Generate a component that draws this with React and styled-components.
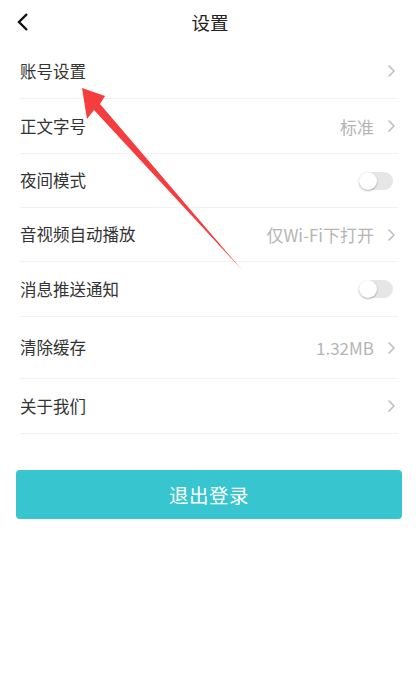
import React, { useState } from 'react';
import styled, { createGlobalStyle } from 'styled-components';

const GlobalStyle = createGlobalStyle`
  html, body {
    margin: 0;
    padding: 0;
    background: #fff;
  }
  body {
    font-family: 'Noto Sans CJK SC', 'Noto Sans', sans-serif;
    -webkit-font-smoothing: antialiased;
  }
`;

const Page = styled.div`
  position: relative;
  width: 420px;
  min-height: 684px;
  background: #fff;
`;

const Header = styled.header`
  display: flex;
  align-items: center;
  justify-content: center;
  position: relative;
  height: 44px;
`;

const BackButton = styled.button`
  position: absolute;
  left: 12px;
  top: 10px;
  display: flex;
  align-items: center;
  justify-content: center;
  width: 22px;
  height: 24px;
  padding: 0;
  border: none;
  background: none;
  cursor: pointer;
`;

const Title = styled.h1`
  margin: 0;
  font-size: 18.5px;
  font-weight: 400;
  color: #222;
  line-height: 1;
`;

const List = styled.ul`
  list-style: none;
  margin: 0;
  padding: 0;
`;

const Row = styled.li`
  display: flex;
  align-items: center;
  justify-content: space-between;
  box-sizing: border-box;
  height: ${({ $height }) => $height || 55}px;
  margin: 0 22px 0 20px;
  border-bottom: 1px solid #f2f2f2;
  cursor: pointer;
`;

const Label = styled.span`
  font-size: 16.5px;
  color: #333;
  line-height: 1;
`;

const Right = styled.div`
  display: flex;
  align-items: center;
  gap: 13px;
`;

const Value = styled.span`
  font-size: 17px;
  color: #b5b5b5;
  line-height: 1;
`;

const ChevronIcon = styled.svg`
  margin-right: 2px;
`;

const Track = styled.span`
  position: relative;
  display: inline-block;
  width: 34px;
  height: 18px;
  margin-right: 5px;
  border-radius: 9px;
  background: ${({ $on }) => ($on ? '#36c5ce' : '#e6e6e6')};
  transition: background 0.2s;
`;

const Knob = styled.span`
  position: absolute;
  top: 0;
  left: ${({ $on }) => ($on ? '16px' : '0')};
  width: 18px;
  height: 18px;
  border-radius: 50%;
  background: #fff;
  box-shadow: 0 1px 2px rgba(0, 0, 0, 0.3);
  transition: left 0.2s;
`;

const LogoutButton = styled.button`
  display: block;
  box-sizing: border-box;
  width: 386px;
  height: 49px;
  margin: 36px 18px 0 16px;
  border: none;
  border-radius: 4px;
  background: #37c6cf;
  color: #fff;
  font-family: inherit;
  font-size: 19.5px;
  letter-spacing: 0.5px;
  cursor: pointer;
`;

const Overlay = styled.svg`
  position: absolute;
  left: 0;
  top: 0;
  width: 420px;
  height: 684px;
  pointer-events: none;
`;

function Chevron() {
  return (
    <ChevronIcon width="9" height="14" viewBox="0 0 9 14">
      <path d="M1.5 1.5 L7 7 L1.5 12.5" fill="none" stroke="#bdbdbd" strokeWidth="1.5" />
    </ChevronIcon>
  );
}

function Toggle({ on, onChange }) {
  return (
    <Track $on={on} onClick={onChange}>
      <Knob $on={on} />
    </Track>
  );
}

const items = [
  { label: '账号设置' },
  { label: '正文字号', value: '标准' },
  { label: '夜间模式', toggle: 'night', height: 54 },
  { label: '音视频自动播放', value: '仅Wi-Fi下打开', height: 54 },
  { label: '消息推送通知', toggle: 'push' },
  { label: '清除缓存', value: '1.32MB', height: 62 },
  { label: '关于我们' },
];

export default function App() {
  const [toggles, setToggles] = useState({ night: false, push: false });

  return (
    <Page>
      <GlobalStyle />
      <Header>
        <BackButton aria-label="返回">
          <svg width="14" height="20" viewBox="0 0 14 20">
            <path d="M11 2 L3 10 L11 18" fill="none" stroke="#111" strokeWidth="2.4" />
          </svg>
        </BackButton>
        <Title>设置</Title>
      </Header>
      <List>
        {items.map((item) => (
          <Row key={item.label} $height={item.height}>
            <Label>{item.label}</Label>
            <Right>
              {item.value && <Value>{item.value}</Value>}
              {item.toggle ? (
                <Toggle
                  on={toggles[item.toggle]}
                  onChange={() => setToggles({ ...toggles, [item.toggle]: !toggles[item.toggle] })}
                />
              ) : (
                <Chevron />
              )}
            </Right>
          </Row>
        ))}
      </List>
      <LogoutButton>退出登录</LogoutButton>
      <Overlay viewBox="0 0 420 684">
        <polygon
          points="82,88 105,96 100,104 242,270 94,110 87,119"
          fill="#f53d3d"
        />
      </Overlay>
    </Page>
  );
}
